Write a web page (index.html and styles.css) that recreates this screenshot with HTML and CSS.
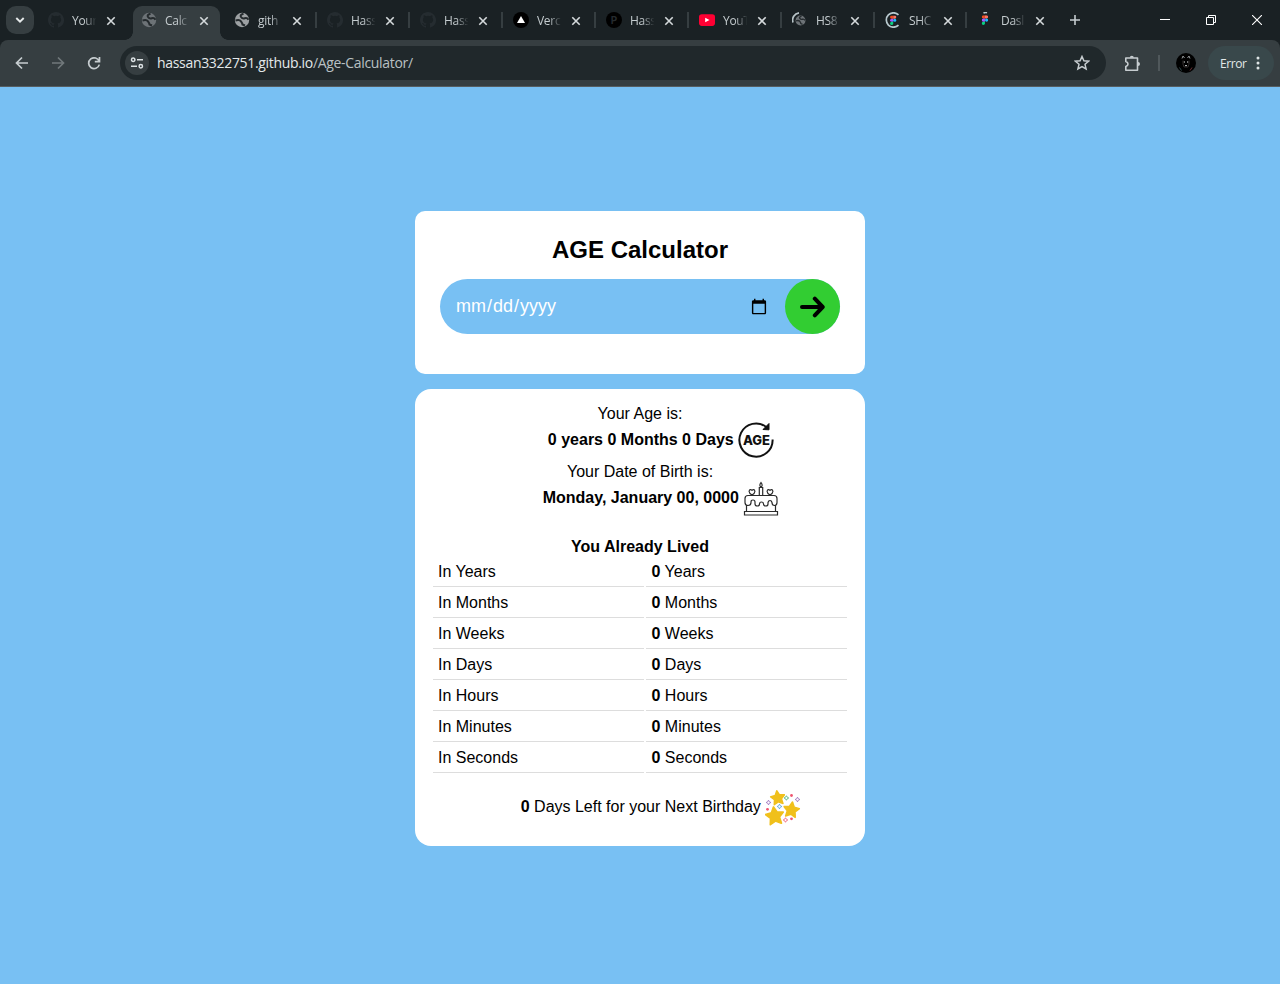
FILE: index.html
```html
<!DOCTYPE html>
<html lang="en">
<head>
<meta charset="utf-8">
<title>Calculate Age</title>
<link rel="stylesheet" href="styles.css">
</head>
<body>
<svg class="defs" width="0" height="0">
  <defs>
    <symbol id="github" viewBox="0 0 16 16"><path fill="#252c30" d="M8 0C3.58 0 0 3.58 0 8c0 3.54 2.29 6.53 5.47 7.59.4.07.55-.17.55-.38v-1.49c-2.01.37-2.53-.49-2.69-.94-.09-.23-.48-.94-.82-1.13-.28-.15-.68-.52-.01-.53.63-.01 1.08.58 1.23.82.72 1.21 1.87.87 2.33.66.07-.52.28-.87.51-1.07-1.78-.2-3.64-.89-3.64-3.95 0-.87.31-1.59.82-2.15-.08-.2-.36-1.02.08-2.12 0 0 .67-.21 2.2.82a7.4 7.4 0 0 1 4 0c1.53-1.04 2.2-.82 2.2-.82.44 1.1.16 1.92.08 2.12.51.56.82 1.27.82 2.15 0 3.07-1.87 3.75-3.65 3.95.29.25.54.73.54 1.48v2.2c0 .21.15.46.55.38A8 8 0 0 0 8 0z"/></symbol>
    <symbol id="globe" viewBox="0 0 16 16"><circle cx="8" cy="8" r="7.2" fill="currentColor"/><path class="land" d="M1.500 8.500Q5.500 7.300 7 9.300T8.500 12.500L11 13.500M9.500 1.800Q5.500 3 7 5t3.800 1.200 3.700 1.500"/></symbol>
    <symbol id="figma" viewBox="0 0 10 15"><path fill="#f24e1e" d="M5 0H2.500a2.500 2.500 0 0 0 0 5H5z"/><path fill="#ff7262" d="M5 0h2.500a2.500 2.500 0 0 1 0 5H5z"/><path fill="#a259ff" d="M5 5H2.500a2.500 2.500 0 0 0 0 5H5z"/><circle fill="#1abcfe" cx="7.500" cy="7.500" r="2.500"/><path fill="#0acf83" d="M5 10H2.500A2.500 2.500 0 1 0 5 12.500z"/></symbol>
    <symbol id="close" viewBox="0 0 10 10"><path d="M1.300 1.300l7.400 7.400M8.700 1.300L1.300 8.700" stroke="currentColor" stroke-width="1.600"/></symbol>
    <symbol id="star" viewBox="0 0 20 20"><path d="M10 1l2.900 5.700 6.300.9-4.600 4.500 1.100 6.400L10 15.500l-5.700 3 1.100-6.400L.8 7.600l6.300-.9z" fill="#f0c01c" stroke="#f0c01c" stroke-width="1.800" stroke-linejoin="round"/></symbol>
    <symbol id="spark" viewBox="0 0 6 6"><path d="M3 .4L3.900 2.100 5.600 3 3.900 3.900 3 5.600 2.100 3.900.4 3 2.100 2.100z" fill="#fff" stroke="currentColor" stroke-width=".9"/></symbol>
  </defs>
</svg>

<header class="browser">
  <div class="tabstrip">
    <div class="tab-search"><svg width="10" height="8" viewBox="0 0 10 8"><path d="M1.300 2L5 5.700 8.700 2" fill="none" stroke="#e6eaeb" stroke-width="1.900"/></svg></div>
    <div class="tabs">
      <div class="tab"><svg class="fav"><use href="#github"/></svg><span class="label">Your</span><svg class="x"><use href="#close"/></svg></div>
      <div class="tab active"><svg class="fav globe dim"><use href="#globe"/></svg><span class="label">Calc</span><svg class="x"><use href="#close"/></svg></div>
      <div class="tab"><svg class="fav globe"><use href="#globe"/></svg><span class="label">gith</span><svg class="x"><use href="#close"/></svg></div>
      <div class="tab sep"><svg class="fav"><use href="#github"/></svg><span class="label">Hass</span><svg class="x"><use href="#close"/></svg></div>
      <div class="tab sep"><svg class="fav"><use href="#github"/></svg><span class="label">Hass</span><svg class="x"><use href="#close"/></svg></div>
      <div class="tab sep"><svg class="fav" viewBox="0 0 16 16"><circle cx="8" cy="8" r="8"/><path d="M8 4l4 7H4z" fill="#fff"/></svg><span class="label">Verc</span><svg class="x"><use href="#close"/></svg></div>
      <div class="tab sep"><span class="fav portfolio">P</span><span class="label">Hass</span><svg class="x"><use href="#close"/></svg></div>
      <div class="tab sep"><svg class="fav" viewBox="0 0 16 16"><rect y="2.300" width="16" height="11.600" rx="2.800" fill="#ff0033"/><path d="M6.200 5.700v4.600L10.500 8z" fill="#fff"/></svg><span class="label">YouT</span><svg class="x"><use href="#close"/></svg></div>
      <div class="tab sep"><svg class="fav" viewBox="0 0 16 16"><path d="M1 10.500A7.300 7.300 0 0 1 7 .9" fill="none" stroke="#b8c4c8" stroke-width="1.700"/><g class="globe dim"><use href="#globe" x="3" y="3" width="11" height="11"/></g></svg><span class="label">HS8</span><svg class="x"><use href="#close"/></svg></div>
      <div class="tab sep narrow"><svg class="fav" viewBox="0 0 16 16"><path d="M13.500 2.800A7.200 7.200 0 1 0 13.500 13.200" fill="none" stroke="#b8c9ce" stroke-width="1.700"/><use href="#figma" x="5" y="3.500" width="6.500" height="9.500"/></svg><span class="label">SHC</span><svg class="x"><use href="#close"/></svg></div>
      <div class="tab sep"><svg class="fav" viewBox="0 0 16 16"><path d="M6.500 1.300Q8 0 10 .8" fill="none" stroke="#b8c9ce" stroke-width="1.500"/><use href="#figma" x="4.700" y="3.200" width="6.500" height="9.700"/></svg><span class="label">Das<span>l</span></span><svg class="x"><use href="#close"/></svg></div>
    </div>
    <div class="new-tab"><svg width="12" height="12" viewBox="0 0 12 12"><path d="M6 1v10M1 6h10" stroke="#c5cccf" stroke-width="1.600"/></svg></div>
    <div class="window-controls">
      <svg width="10" height="10" viewBox="0 0 10 10"><path d="M0 4.500h10" stroke="#fff"/></svg>
      <svg width="10" height="10" viewBox="0 0 10 10"><path d="M.5 2.500h7v7h-7zM2.500 2.500v-2h7v7h-2" fill="none" stroke="#fff"/></svg>
      <svg width="10" height="10" viewBox="0 0 10 10"><path d="M0 0l10 10M10 0L0 10" stroke="#fff" stroke-width="1.100"/></svg>
    </div>
  </div>

  <div class="toolbar">
    <svg class="nav" viewBox="0 0 16 16"><path d="M14 8H2.800M8 2.500L2.500 8 8 13.500" stroke="#c7cdd0"/></svg>
    <svg class="nav" viewBox="0 0 16 16"><path d="M2 8h11.200M8 2.500L13.500 8 8 13.500" stroke="#71787b"/></svg>
    <svg class="nav" viewBox="0 0 16 16"><path d="M13.200 6.500A5.400 5.400 0 1 0 13.300 9.600M13.500 2v4.700H8.800" stroke="#c7cdd0"/></svg>
    <div class="omnibox">
      <span class="site-info"><svg width="14" height="12" viewBox="0 0 14 12" fill="none" stroke="#dce2e4" stroke-width="1.500"><circle cx="3.200" cy="2.700" r="1.700"/><path d="M7 2.700h6M1 9.300h6"/><circle cx="10.800" cy="9.300" r="1.700"/></svg></span>
      <span class="url">hassan3322751.github.io<span class="path">/Age-Calculator/</span></span>
      <svg class="bookmark" width="16" height="16" viewBox="0 0 16 16"><path d="M8 1.500l1.900 4.300 4.700.4-3.600 3.100 1.100 4.600L8 11.500l-4.100 2.400L5 9.300 1.400 6.200l4.700-.4z" fill="none" stroke="#c7cdd0" stroke-width="1.500"/></svg>
    </div>
    <svg class="ext" width="17" height="17" viewBox="0 0 17 17"><path d="M1.800 3h11.700v12.200H1.800v-3.600q2.200-.6 2.200-2.500T1.800 6.600z" fill="none" stroke="#c7cdd0" stroke-width="1.600" stroke-linejoin="round"/><path d="M5.800 2.700a2 2 0 0 1 4 0zM14 7.100a2 2 0 0 1 0 4z" fill="#c7cdd0"/></svg>
    <span class="divider"></span>
    <svg class="avatar" width="20" height="20" viewBox="0 0 20 20"><circle cx="10" cy="10" r="10"/><path d="M6 5.500L7 3l1.500 2M11.500 5L13 3l1 2.500" fill="none" stroke="#92979a"/><path d="M7.700 9h1.300M11 9h1.300M9 12.700h2" stroke="#d9dcdc" fill="none"/><path d="M7 7.500q-.5 4 1 6.500h4q1.500-2.500 1-6.500" stroke="#34302f" fill="none"/><path d="M3.500 14.500l2 3" stroke="#345052"/><path d="M16 14.500l-2 3" stroke="#6a3034"/></svg>
    <div class="error">Error<svg width="4" height="14" viewBox="0 0 4 14" fill="#dfe5e6"><circle cx="2" cy="2" r="1.500"/><circle cx="2" cy="7" r="1.500"/><circle cx="2" cy="12" r="1.500"/></svg></div>
  </div>
</header>

<main class="page">
  <section class="card form-card">
    <h1>AGE Calculator</h1>
    <form class="field">
      <input type="date" aria-label="Date of birth">
      <button type="button" aria-label="Calculate"><svg width="26" height="22" viewBox="0 0 26 22"><path d="M2 11h20M14.800 2.700L22.700 11l-7.900 8.300" fill="none" stroke="#000" stroke-width="4" stroke-linecap="round" stroke-linejoin="round"/></svg></button>
    </form>
  </section>

  <section class="card result-card">
    <p class="line">Your Age is:</p>
    <p class="line strong">0 years 0 Months 0 Days <svg class="pic age" viewBox="0 0 36 36"><path d="M28.500 5.200A16.600 16.600 0 1 0 34.600 17.500" fill="none" stroke="#111" stroke-width="2"/><path d="M31 1.500v6.300l-6-.3z" fill="#111" stroke="#111"/><text x="5" y="22.500" class="age-text" textLength="27">AGE</text></svg></p>
    <p class="line">Your Date of Birth is:</p>
    <p class="line strong">Monday, January 00, 0000 <svg class="pic" viewBox="0 0 36 36"><g fill="none" stroke="#2b2b2b" stroke-width="1.200"><path d="M1.500 30.500h33v3.500h-33zM3.500 30.500V24M32.500 30.500V24M5 14.500h26q3 0 3 3v4q0 3-2.500 3t-2.500-3q-.5-2-2-2t-2 2v1.500q0 2-2.200 2T20.500 23q0-2-2-2t-2 2-2.200 2T12 23v-2q0-2-2-2t-2 2v.5q0 3-3 3t-3-3v-4q0-3 3-3z"/><path d="M16.300 14V6.500h3.400V14M18 6q-2.300-1.500 0-4.500 2.300 3 0 4.500zM9 14q-3-2-2.900-3.700Q6.700 7.500 9 9.300q2.300-1.800 2.900 1Q12 12 9 14zM27 14q-3-2-2.900-3.700.6-2.800 2.900-1 2.300-1.800 2.900 1Q30 12 27 14z"/></g></svg></p>

    <h2>You Already Lived</h2>
    <div class="table">
      <span>In Years</span><span><b>0</b> Years</span>
      <span>In Months</span><span><b>0</b> Months</span>
      <span>In Weeks</span><span><b>0</b> Weeks</span>
      <span>In Days</span><span><b>0</b> Days</span>
      <span>In Hours</span><span><b>0</b> Hours</span>
      <span>In Minutes</span><span><b>0</b> Minutes</span>
      <span>In Seconds</span><span><b>0</b> Seconds</span>
    </div>
    <p class="line next"><b>0</b> Days Left for your Next Birthday <svg class="pic" viewBox="0 0 36 36"><use href="#star" x="5" y="0" width="15.500" height="15.500" transform="rotate(-8 12 8)"/><use href="#star" x="18" y="11" width="17" height="17" transform="rotate(8 26 19)"/><use href="#star" x="0" y="16" width="19.500" height="19.500" transform="rotate(-8 9 26)"/><use href="#spark" class="violet" x=".8" y="9.800" width="5.400" height="5.400"/><use href="#spark" class="violet" x="29.800" y="6.800" width="5.400" height="5.400"/><use href="#spark" class="green" x="18.700" y="5.300" width="5.400" height="5.400"/><use href="#spark" class="sky" x="11.800" y="13.800" width="5.400" height="5.400"/><use href="#spark" class="rose" x="17.800" y="27.300" width="5.400" height="5.400"/><g fill="#ef5570"><circle cx="26.500" cy="5.500" r="1.400"/><circle cx="2.500" cy="19.300" r="1.400"/><circle cx="26.500" cy="28.800" r="1.400"/></g></svg></p>
  </section>
</main>
</body>
</html>
```
FILE: styles.css
```css
* { box-sizing: border-box; }
body {
  margin: 0;
  height: 984px;
  overflow: hidden;
  display: flex;
  flex-direction: column;
  background: #78c0f3;
  font-family: "Liberation Sans", Arial, sans-serif;
  color: #000;
}
.defs { position: absolute; }
svg { flex: none; }

/* Browser frame */
.browser {
  height: 87px;
  background: #1a2124;
  font-family: "Open Sans", "Noto Sans", sans-serif;
  color: #c5cccf;
}
.tabstrip { height: 40px; display: flex; align-items: center; }
.tab-search {
  width: 28px; height: 28px; margin: 0 6px; border-radius: 10px;
  background: #363e41;
  display: flex; align-items: center; justify-content: center;
}
.tabs { display: flex; height: 40px; }
.tab {
  position: relative;
  width: 93px;
  padding-left: 8px;
  display: flex; align-items: center;
}
.tab.narrow { width: 92px; }
.fav { width: 16px; height: 16px; flex: none; }
.label {
  width: 26px; margin: 1px 0 0 7px;
  padding-left: 1px;
  white-space: nowrap;
  font-size: 12px; line-height: 20px;
  letter-spacing: -0.3px;
  -webkit-mask-image: linear-gradient(to right, #000 50%, transparent 98%);
  mask-image: linear-gradient(to right, #000 50%, transparent 98%);
}
.x { width: 10px; height: 10px; margin: 1px 0 0 9px; color: #d5dadc; }
.tab.sep::before {
  content: ""; position: absolute; left: -4px; top: 12px;
  width: 2px; height: 16px; background: #363e41;
}
.active::before {
  content: ""; position: absolute; left: 0; top: 6px; z-index: 0;
  width: 87px; height: 34px; border-radius: 9px 9px 0 0;
  background: #363e41;
}
.active::after {
  content: ""; position: absolute; left: -8px; bottom: 0;
  width: 103px; height: 8px;
  background:
    radial-gradient(circle at 0 0, transparent 7.5px, #363e41 8px) left / 8px 8px no-repeat,
    radial-gradient(circle at 100% 0, transparent 7.5px, #363e41 8px) right / 8px 8px no-repeat;
}
.active > * { z-index: 1; }
.globe { color: #9da1a3; }
.globe.dim { color: #6d7377; }
.land { fill: none; stroke: #252b2e; stroke-width: 2; }
.portfolio {
  border-radius: 50%; background: #000; color: #252b2e;
  font: bold 10px/16px Inter, sans-serif; text-align: center;
}
.new-tab { width: 26px; display: flex; justify-content: center; }
.window-controls { margin-left: auto; padding-right: 18px; display: flex; gap: 36px; }

.toolbar {
  height: 47px;
  padding: 0 6px 0 14px;
  display: flex; align-items: center;
  background: #363e41;
  border-bottom: 1px solid #565d60;
  border-radius: 8px 8px 0 0;
}
.nav { width: 16px; height: 16px; margin-right: 20px; fill: none; stroke-width: 1.7; }
.nav:nth-child(3) { margin-right: 18px; }
.omnibox {
  width: 986px; height: 34px; padding: 0 16px 0 5px; border-radius: 17px;
  background: #20282b;
  display: flex; align-items: center;
}
.site-info {
  width: 24px; height: 24px; border-radius: 50%; background: #363e41;
  display: flex; align-items: center; justify-content: center;
}
.url { margin: -1px 0 0 8px; font-size: 14px; letter-spacing: -0.32px; color: #e4e9ea; }
.path { color: #b9c0c3; }
.bookmark { margin-left: auto; }
.ext { margin-left: 18px; }
.divider { width: 2px; height: 16px; margin-left: 17px; background: #50585b; }
.avatar { margin-left: 16px; }
.error {
  width: 66px; height: 34px; margin-left: 12px; padding: 0 14px 0 12px;
  border-radius: 17px; background: #39484b; color: #e2e8e9;
  display: flex; align-items: center; justify-content: space-between;
  font-size: 12px; letter-spacing: -0.4px;
}

/* Age calculator */
.page { flex: 1; display: flex; flex-direction: column; align-items: center; padding-top: 124px; }
.card { width: 450px; background: #fff; }
.form-card { height: 163px; padding: 25px; border-radius: 10px; }
h1 { margin: 0 0 15px; font-size: 24px; line-height: 28px; text-align: center; }
.field { display: flex; height: 55px; border-radius: 28px; background: #78c0f3; }
.field input {
  flex: 1; min-width: 0; padding: 0 15px; border: 0; background: none;
  font: 18px "Liberation Sans", Arial, sans-serif; color: #fff;
}
.field button {
  width: 55px; height: 55px; padding: 0; border: 0; border-radius: 50%;
  background: #32cd32;
  display: flex; align-items: center; justify-content: center;
}
.result-card { height: 457px; margin-top: 15px; padding: 16px 18px 0; border-radius: 16px; }
.line { margin: 0; height: 18px; line-height: 18px; font-size: 16px; text-align: center; white-space: nowrap; }
.strong { height: 40px; line-height: 34px; font-weight: bold; }
.pic { width: 36px; height: 36px; margin-right: -42px; vertical-align: middle; }
.pic.age { margin-top: -1px; }
.age-text { font: 800 13px Inter, sans-serif; fill: #111; }
.violet { color: #9468b8; }
.green { color: #4bb277; }
.sky { color: #4c9fdb; }
.rose { color: #ef5f73; }
h2 { margin: 16px 0 2px; font-size: 16px; line-height: 19px; text-align: center; }
.table { display: grid; grid-template-columns: 211px 201px; gap: 2px; }
.table span { height: 29px; padding-left: 5px; border-bottom: 1px solid #ddd; font-size: 16px; line-height: 28px; }
.table span:nth-child(even) { padding-left: 5.500px; }
.next { margin-top: 16px; height: 36px; line-height: 36px; }
```
